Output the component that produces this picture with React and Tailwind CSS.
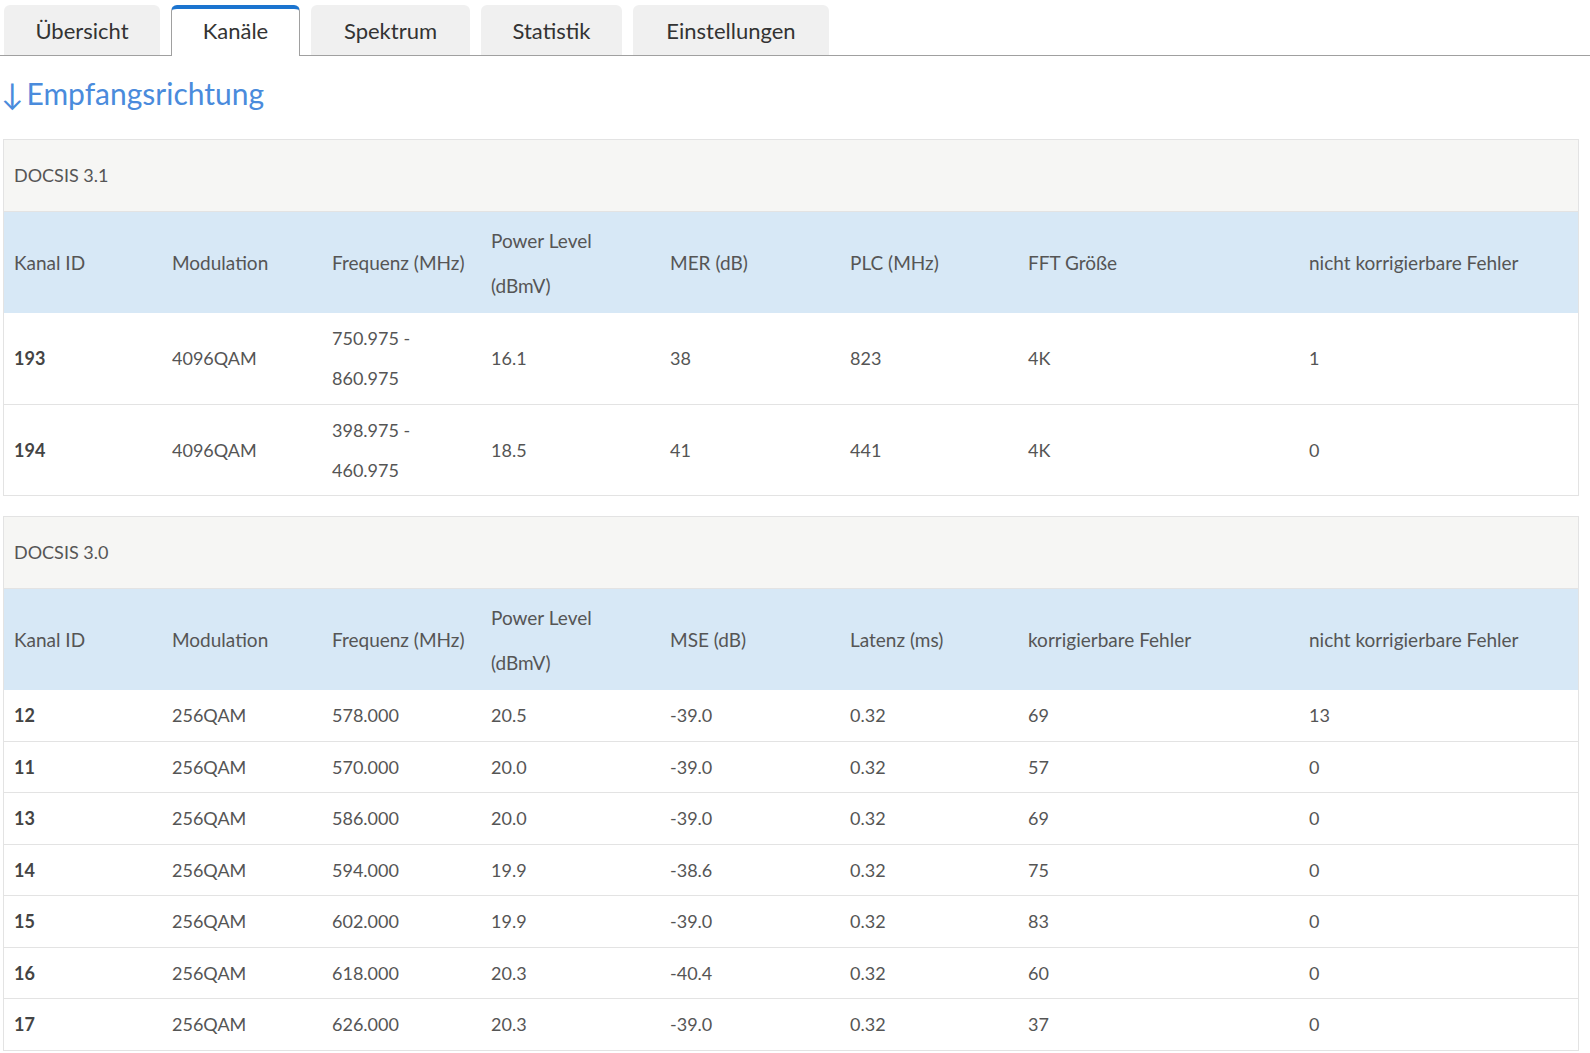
import React from "react";

const tabs = ["Übersicht", "Kanäle", "Spektrum", "Statistik", "Einstellungen"];
const tabWidths = ["w-[156px]", "w-[129px]", "w-[159px]", "w-[141px]", "w-[196px]"];

const colWidths = [158, 160, 159, 179, 180, 178, 281, 279];

const docsis31Head = [
  "Kanal ID",
  "Modulation",
  "Frequenz (MHz)",
  ["Power Level", "(dBmV)"],
  "MER (dB)",
  "PLC (MHz)",
  "FFT Größe",
  "nicht korrigierbare Fehler",
];

const docsis31Rows = [
  ["193", "4096QAM", ["750.975 -", "860.975"], "16.1", "38", "823", "4K", "1"],
  ["194", "4096QAM", ["398.975 -", "460.975"], "18.5", "41", "441", "4K", "0"],
];

const docsis30Head = [
  "Kanal ID",
  "Modulation",
  "Frequenz (MHz)",
  ["Power Level", "(dBmV)"],
  "MSE (dB)",
  "Latenz (ms)",
  "korrigierbare Fehler",
  "nicht korrigierbare Fehler",
];

const docsis30Rows = [
  ["12", "256QAM", "578.000", "20.5", "-39.0", "0.32", "69", "13"],
  ["11", "256QAM", "570.000", "20.0", "-39.0", "0.32", "57", "0"],
  ["13", "256QAM", "586.000", "20.0", "-39.0", "0.32", "69", "0"],
  ["14", "256QAM", "594.000", "19.9", "-38.6", "0.32", "75", "0"],
  ["15", "256QAM", "602.000", "19.9", "-39.0", "0.32", "83", "0"],
  ["16", "256QAM", "618.000", "20.3", "-40.4", "0.32", "60", "0"],
  ["17", "256QAM", "626.000", "20.3", "-39.0", "0.32", "37", "0"],
];

// two-part values wrap like the original cell text
const Cell = ({ value }) =>
  Array.isArray(value) ? (
    <>
      {value[0]}
      <br />
      {value[1]}
    </>
  ) : (
    value
  );

const ChannelTable = ({ title, head, rows }) => (
  <div className="w-[1576px] border border-[#e3e3e3]">
    <div className="h-[72px] bg-[#f6f6f4] border-b border-[#e3e3e3] flex items-center pl-[10px] text-[18px] text-[#555]">
      {title}
    </div>
    <table className="table-fixed w-full border-collapse">
      <colgroup>
        {colWidths.map((w, i) => (
          <col key={i} style={{ width: w }} />
        ))}
      </colgroup>
      <thead>
        <tr className="bg-[#d7e8f6]">
          {head.map((h, i) => (
            <th
              key={i}
              className="text-left font-normal text-[19px] leading-[45px] text-[#555] px-[10px] py-[5.5px] align-middle"
            >
              <Cell value={h} />
            </th>
          ))}
        </tr>
      </thead>
      <tbody>
        {rows.map((r, ri) => (
          <tr key={ri} className={ri < rows.length - 1 ? "border-b border-[#e3e3e3]" : ""}>
            {r.map((c, ci) => (
              <td
                key={ci}
                className={`text-[18px] leading-[40px] px-[10px] py-[5.25px] align-middle ${
                  ci === 0 ? "font-bold text-[#444]" : "text-[#555]"
                }`}
              >
                <Cell value={c} />
              </td>
            ))}
          </tr>
        ))}
      </tbody>
    </table>
  </div>
);

export default function App() {
  return (
    <div className="w-full min-h-screen bg-white font-['Lato','Open_Sans',sans-serif]">
      {/* --- Tabs --- */}
      <div className="flex items-end gap-[11px] pl-[4px] pt-[5px] border-b border-[#a0a0a0] h-[56px]">
        {tabs.map((t, i) =>
          i === 1 ? (
            <div
              key={t}
              className={`${tabWidths[i]} h-[51px] -mb-px pb-[4px] bg-white border-x border-[#a0a0a0] border-t-4 border-t-[#1b74cf] rounded-t-[6px] flex items-center justify-center text-[22px] text-[#333]`}
            >
              {t}
            </div>
          ) : (
            <div
              key={t}
              className={`${tabWidths[i]} h-[50px] bg-[#f0f0f0] rounded-t-[6px] flex items-center justify-center text-[22px] text-[#333]`}
            >
              {t}
            </div>
          )
        )}
      </div>

      {/* --- Heading --- */}
      <h1 className="pl-[1px] mt-[17px] h-[40px] flex items-center text-[30px] text-[#4a8bdc]">
        <span className="mr-[3px]">↓</span>Empfangsrichtung
      </h1>

      <div className="pl-[3px] mt-[26px] flex flex-col gap-[20px]">
        <ChannelTable title="DOCSIS 3.1" head={docsis31Head} rows={docsis31Rows} />
        <ChannelTable title="DOCSIS 3.0" head={docsis30Head} rows={docsis30Rows} />
      </div>
    </div>
  );
}
